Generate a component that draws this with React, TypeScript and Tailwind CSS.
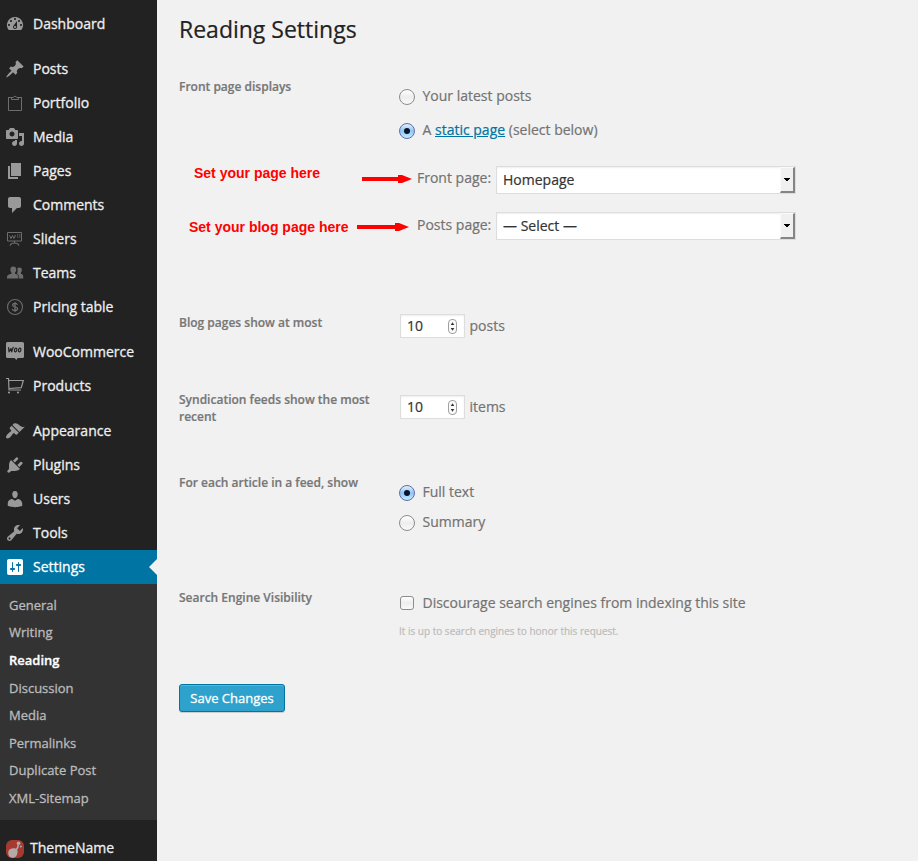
import React from "react";

type IconProps = { name: string };

const paths: Record<string, string> = {
  dashboard:
    "M3.76 16h12.48A7.998 7.998 0 0 0 10 3a7.998 7.998 0 0 0-6.24 13zM10 4c.55 0 1 .45 1 1s-.45 1-1 1-1-.45-1-1 .45-1 1-1zM6 6c.55 0 1 .45 1 1s-.45 1-1 1-1-.45-1-1 .45-1 1-1zm8 0c.55 0 1 .45 1 1s-.45 1-1 1-1-.45-1-1 .45-1 1-1zm-5.37 5.55L12 7v6c0 1.1-.9 2-2 2s-2-.9-2-2c0-.57.24-1.08.63-1.45zM4 10c.55 0 1 .45 1 1s-.45 1-1 1-1-.45-1-1 .45-1 1-1zm12 0c.55 0 1 .45 1 1s-.45 1-1 1-1-.45-1-1 .45-1 1-1zm-5 3c0-.55-.45-1-1-1s-1 .45-1 1 .45 1 1 1 1-.45 1-1z",
  posts:
    "M10.44 3.02l1.82-1.82 6.36 6.35-1.83 1.82c-1.05-.68-2.48-.57-3.41.36l-.75.75c-.92.93-1.04 2.35-.35 3.41l-1.83 1.82-2.41-2.41-2.8 2.79c-.42.42-3.38 2.71-3.8 2.29s1.86-3.39 2.28-3.81l2.79-2.79L4.1 9.36l1.83-1.82c1.05.69 2.48.57 3.4-.36l.75-.75c.93-.92 1.05-2.35.36-3.41z",
  media:
    "M13 11V4c0-.55-.45-1-1-1h-1.67L9 1H5L3.67 3H2c-.55 0-1 .45-1 1v7c0 .55.45 1 1 1h10c.55 0 1-.45 1-1zM7 4.5c1.38 0 2.5 1.12 2.5 2.5S8.38 9.5 7 9.5 4.5 8.38 4.5 7 5.62 4.5 7 4.5zM14 6h5v10.5c0 1.38-1.12 2.5-2.5 2.5S14 17.88 14 16.5s1.12-2.5 2.5-2.5c.17 0 .34.02.5.05V9h-3V6zm-4 8.05V13h2v3.5c0 1.38-1.12 2.5-2.5 2.5S7 17.88 7 16.5 8.12 14 9.5 14c.17 0 .34.02.5.05z",
  pages: "M6 15V2h10v13H6zm-1 1h8v2H3V5h2v11z",
  comments: "M5 2h9c1.1 0 2 .9 2 2v7c0 1.1-.9 2-2 2h-2l-5 5v-5H5c-1.1 0-2-.9-2-2V4c0-1.1.9-2 2-2z",
  appearance:
    "M14.48 11.06L7.41 3.99l1.5-1.5c.5-.56 2.3-.47 3.51.32 1.21.8 1.43 1.28 2.91 2.1 1.18.64 2.45 1.26 4.45.85zm-.71.71L6.7 4.7 4.93 6.47c-.39.39-.39 1.02 0 1.41l1.06 1.06c.39.39.39 1.03 0 1.42-.6.6-1.43 1.11-2.21 1.69-.35.26-.7.53-1.01.84C1.43 14.23.4 16.08 1.4 17.07c.99 1 2.84-.03 4.18-1.36.31-.31.58-.66.85-1.02.57-.78 1.08-1.61 1.69-2.21.39-.39 1.02-.39 1.41 0l1.06 1.06c.39.39 1.02.39 1.41 0z",
  plugins:
    "M13.11 4.36L9.87 7.6 8 5.73l3.24-3.24c.35-.34 1.05-.2 1.56.32.52.51.66 1.21.31 1.55zm-8 1.77l.91-1.12 9.01 9.01-1.19.84c-.71.71-2.63 1.16-3.82 1.16H6.14L4.9 17.26c-.59.59-1.54.59-2.12 0-.59-.58-.59-1.53 0-2.12l1.24-1.24v-3.88c0-1.13.4-3.19 1.09-3.89zm7.26 3.97l3.24-3.24c.34-.35 1.04-.21 1.55.31.52.51.66 1.21.31 1.55l-3.24 3.25z",
  users:
    "M10 9.25c-2.27 0-2.73-3.44-2.73-3.44C7 4.02 7.82 2 9.97 2c2.16 0 2.98 2.02 2.71 3.81 0 0-.41 3.44-2.68 3.44zm0 2.57L12.72 10c2.39 0 4.52 2.33 4.52 4.53v2.49s-3.65 1.13-7.24 1.13c-3.65 0-7.24-1.13-7.24-1.13v-2.49c0-2.25 1.94-4.48 4.47-4.48z",
  tools:
    "M16.68 9.77c-1.34 1.34-3.3 1.67-4.95.99l-5.41 6.52c-.99.99-2.59.99-3.58 0s-.99-2.59 0-3.57l6.52-5.42c-.68-1.65-.35-3.61.99-4.95 1.28-1.28 3.12-1.62 4.72-1.06l-2.89 2.89 2.82 2.82 2.86-2.87c.53 1.58.18 3.39-1.08 4.65zM3.81 16.21c.4.39 1.04.39 1.43 0 .4-.4.4-1.04 0-1.43-.39-.4-1.03-.4-1.43 0-.39.39-.39 1.03 0 1.43z",
  settings:
    "M18 16V4c0-1.1-.9-2-2-2H4c-1.1 0-2 .9-2 2v12c0 1.1.9 2 2 2h12c1.1 0 2-.9 2-2zM8 11h1c.55 0 1 .45 1 1s-.45 1-1 1H8v1.5c0 .28-.22.5-.5.5s-.5-.22-.5-.5V13H6c-.55 0-1-.45-1-1s.45-1 1-1h1V5.5c0-.28.22-.5.5-.5s.5.22.5.5V11zm5-2h-1c-.55 0-1-.45-1-1s.45-1 1-1h1V5.5c0-.28.22-.5.5-.5s.5.22.5.5V7h1c.55 0 1 .45 1 1s-.45 1-1 1h-1v5.5c0 .28-.22.5-.5.5s-.5-.22-.5-.5V9z",
};

function Icon({ name }: IconProps) {
  const dim = "#6d6d6d";
  let body: React.ReactNode = <path fill="currentColor" fillRule="evenodd" d={paths[name]} />;
  if (name === "portfolio") {
    body = (
      <g fill="none" stroke={dim}>
        <path d="M3.500 4.500v13h13v-13" />
        <path d="M3 4.500h3M14 4.500h3M6.500 4v2.500h7V4" />
        <path d="M6 4.500h2.300a1.800 1.800 0 0 1 3.400 0H14" />
      </g>
    );
  } else if (name === "sliders") {
    body = (
      <g fill="none" stroke={dim}>
        <path d="M2.500 3.500h14v8.500h-14z" />
        <path d="M4.500 6.500l1.500 3L7.500 6.500 9 9.500 10.500 6" />
        <path d="M12 6h3.500M12 8h3.500" strokeWidth="1.200" strokeDasharray="1.300 .8" />
        <path d="M9.500 12v2M5 16.500c.8-2 2.500-2.500 4.500-2.500s3.700.5 4.500 2.500" strokeWidth="1.200" />
      </g>
    );
  } else if (name === "teams") {
    body = (
      <g fill={dim}>
        <path d="M8.300 3.500c2 0 2.900 1.200 2.900 3 0 1.500-.5 2.500-1.200 3.100v1.100c2.300.7 3.400 1.300 3.400 3.300v1.500H2V14c0-2 1.700-2.500 4.500-3.300V9.600C5.800 9 5.400 8 5.400 6.500c0-1.800.9-3 2.900-3z" />
        <path d="M14.300 4.500c1.900 0 2.600 1 2.600 2.600 0 1.300-.5 2-1 2.500v1.100c1.800.6 2.300 1.200 2.300 3v1.800h-4c.1-2.600-.6-3.700-2.300-4.400 1-1.400.8-4 .4-5.800.4-.5 1.100-.8 2-.8z" />
      </g>
    );
  } else if (name === "pricing") {
    body = (
      <g fill="none" stroke={dim}>
        <circle cx="10" cy="10" r="7.500" strokeWidth="1.100" />
        <path d="M12.500 7.900C12.100 6.800 11.200 6.400 10 6.400c-1.500 0-2.400.7-2.400 1.700 0 2.600 5 1.100 5 3.700 0 1.100-1 1.800-2.600 1.800-1.400 0-2.400-.6-2.700-1.800M10 4.900v10.200" strokeWidth="1.300" />
      </g>
    );
  } else if (name === "woo") {
    body = (
      <>
        <path fill="currentColor" d="M2.500 0h15A1.500 1.500 0 0 1 19 1.500v13a1.500 1.500 0 0 1-1.500 1.500h-5L11.500 18l-2-2h-7A1.500 1.500 0 0 1 1 14.500v-13A1.500 1.500 0 0 1 2.500 0z" />
        <g fill="none" stroke="#222" strokeWidth="1.200" strokeLinecap="round" strokeLinejoin="round">
          <path d="M3.500 5.500l.6 4.300L5.900 6.500l.8 3.300L8.200 5.300" />
          <ellipse cx="10.700" cy="8" rx="1.200" ry="1.900" transform="rotate(12 10.700 8)" />
          <ellipse cx="14.700" cy="8" rx="1.200" ry="1.900" transform="rotate(12 14.700 8)" />
        </g>
      </>
    );
  } else if (name === "products") {
    body = (
      <g fill="none" stroke="currentColor">
        <path d="M1 2.500h2.500l.5 11.500h12M4 4.500h14.300l-2 7.200L4 12.500" strokeWidth="1.200" />
        <circle cx="4" cy="16.500" r="1.100" fill="currentColor" stroke="none" />
        <circle cx="13" cy="16.500" r="1.100" fill="currentColor" stroke="none" />
      </g>
    );
  }
  return (
    <svg className="ml-[5px] size-5 shrink-0" viewBox="0 0 20 20">
      {body}
    </svg>
  );
}

function MenuRow({ icon, label, active }: { icon: string; label: string; active?: boolean }) {
  return (
    <a
      className={
        active
          ? "relative flex h-[34px] items-center bg-[#0074a2] text-white"
          : "flex h-[34px] items-center text-[#999]"
      }
    >
      <Icon name={icon} />
      <span className={active ? "ml-2 text-white" : "ml-2 text-[#eee]"}>{label}</span>
      {active && (
        <span className="absolute top-[9px] right-0 border-y-8 border-r-8 border-y-transparent border-r-[#f1f1f1]" />
      )}
    </a>
  );
}

function Radio({ checked }: { checked?: boolean }) {
  return (
    <span
      className={
        checked
          ? "mt-0.5 flex size-4 shrink-0 items-center justify-center rounded-full border border-[#5d6ea8] bg-gradient-to-b from-[#e4f0fc] via-[#90c4f4] to-[#c2ecff]"
          : "mt-0.5 flex size-4 shrink-0 items-center justify-center rounded-full border border-[#8c8c8c] bg-gradient-to-b from-white via-[#ededed] to-[#fafafa]"
      }
    >
      {checked && <span className="size-1.5 rounded-full bg-[#08142c]" />}
    </span>
  );
}

function Choice({ checked, children }: { checked?: boolean; children: React.ReactNode }) {
  return (
    <label className="flex h-5 items-center gap-[7.500px]">
      <Radio checked={checked} />
      <span>{children}</span>
    </label>
  );
}

function Select({ value }: { value: string }) {
  return (
    <div className="flex h-7 w-[300px] border border-[#ddd] bg-white pl-1.5 text-[#333] shadow-[inset_0_1px_2px_rgba(0,0,0,0.07)]">
      <span className="flex-1 leading-[26px]">{value}</span>
      <span className="flex w-[15px] items-center justify-center border-t border-r-2 border-b-2 border-l border-t-[#fafafa] border-r-[#858585] border-b-[#858585] border-l-[#fafafa] bg-[#f0f0f0]">
        <svg className="h-1 w-1.5" viewBox="0 0 6 4">
          <path d="M0 0h6v1H5v1H4v1H2V2H1V1H0z" fill="#000" />
        </svg>
      </span>
    </div>
  );
}

function NumberField({ value, unit }: { value: string; unit: string }) {
  return (
    <div className="flex h-6 items-center">
      <div className="ml-px flex h-6 w-[65px] items-center justify-between border border-[#ddd] bg-white pr-[7px] pl-1.5 text-[#333] shadow-[inset_0_1px_2px_rgba(0,0,0,0.07)]">
        <span>{value}</span>
        <svg className="h-[15px] w-[9px]" viewBox="0 0 9 15">
          <rect x=".5" y=".5" width="8" height="14" rx="3.500" fill="#fafafa" stroke="#a0a0a0" />
          <path d="M4.500 3.200L6.300 6H2.700zM4.500 11.800L6.300 9H2.700z" fill="#333" />
        </svg>
      </div>
      <span className="ml-[4.500px]">{unit}</span>
    </div>
  );
}

function Arrow() {
  return (
    <svg className="h-2 w-[50px] shrink-0" viewBox="0 0 50 8">
      <path d="M0 2h36V0h4l10 4-10 4h-4V6H0z" fill="#f00" />
    </svg>
  );
}

function Label({ children }: { children: React.ReactNode }) {
  return <div className="w-[220px] shrink-0 pr-6 text-[12px] leading-[17px] font-semibold text-[#777]">{children}</div>;
}

const groups = [
  [["dashboard", "Dashboard"]],
  [
    ["posts", "Posts"],
    ["portfolio", "Portfolio"],
    ["media", "Media"],
    ["pages", "Pages"],
    ["comments", "Comments"],
    ["sliders", "Sliders"],
    ["teams", "Teams"],
    ["pricing", "Pricing table"],
  ],
  [
    ["woo", "WooCommerce"],
    ["products", "Products"],
  ],
  [
    ["appearance", "Appearance"],
    ["plugins", "Plugins"],
    ["users", "Users"],
    ["tools", "Tools"],
    ["settings", "Settings"],
  ],
];

const submenu = ["General", "Writing", "Reading", "Discussion", "Media", "Permalinks", "Duplicate Post", "XML-Sitemap"];

export default function App() {
  return (
    <div className="flex h-[861px] w-[918px] overflow-hidden bg-[#f1f1f1] font-['Open_Sans',sans-serif] text-[14px] leading-5 text-[#737373] [-webkit-text-stroke:0.2px]">
      <nav className="w-[157px] shrink-0 bg-[#222] pt-[7px] [-webkit-text-stroke:0.3px]">
        <div className="flex flex-col gap-[11px]">
          {groups.map((group, i) => (
            <div key={i}>
              {group.map(([icon, label]) => (
                <MenuRow key={label} icon={icon} label={label} active={icon === "settings"} />
              ))}
            </div>
          ))}
        </div>
        <ul className="h-[236px] bg-[#333] pt-[7.750px] pl-[9px] text-[13px] text-[#bbb]">
          {submenu.map((item) => (
            <li
              key={item}
              className={
                item === "Reading"
                  ? "h-[27.600px] leading-[27.600px] font-semibold text-white"
                  : "h-[27.600px] leading-[27.600px]"
              }
            >
              {item}
            </li>
          ))}
        </ul>
        <a className="mt-[11px] flex h-[34px] items-center pl-1.5 text-[#eee]">
          <svg className="mt-0.5 size-[18px]" viewBox="0 0 18 18">
            <rect width="18" height="18" rx="6" fill="#a53a30" />
            <path d="M10 10c1.800-1.800 2.400-3.500 2.400-6" fill="none" stroke="#b5aaa9" strokeWidth="1.500" />
            <circle cx="12.600" cy="3.200" r="1.800" fill="#b5aaa9" />
            <circle cx="14.800" cy="6.500" r="1" fill="#b5aaa9" />
            <path d="M2.200 13c0-3 2-4.500 4.800-4.700 2 0 4.600.2 4.600 3.200 0 3.500-1.800 6.300-5 6.300-2.600 0-4.400-1.800-4.400-4.800z" fill="#b5aaa9" />
          </svg>
          <span className="ml-1.5">ThemeName</span>
        </a>
      </nav>

      <main className="flex-1 pt-[15px] pl-[22px]">
        <h1 className="h-[63px] text-[23px] leading-[29px] text-[#222]">Reading Settings</h1>
        <section className="flex h-[236px]">
          <Label>Front page displays</Label>
          <div className="pt-2">
            <Choice>Your latest posts</Choice>
            <div className="h-3.5" />
            <Choice checked>
              A <a className="text-[#0074a2] underline">static page</a> (select below)
            </Choice>
            <div className="mt-[26px] -ml-[205px] flex h-7">
              <b className="-mt-px w-[168px] font-['Liberation_Sans',sans-serif] text-[14px] leading-4 text-[#f00] [-webkit-text-stroke:0]">
                Set your page here
              </b>
              <div className="pt-[9px]">
                <Arrow />
              </div>
              <span className="ml-[5px] w-[79px] pt-0.5">Front page:</span>
              <Select value="Homepage" />
            </div>
            <div className="mt-[18px] -ml-[210px] flex h-7">
              <b className="w-[169px] pt-[7px] font-['Liberation_Sans',sans-serif] text-[14px] leading-4 text-[#f00] [-webkit-text-stroke:0]">
                Set your blog page here
              </b>
              <div className="-ml-px pt-[11px]">
                <svg className="h-2 w-[52px]" viewBox="0 0 52 8">
                  <path d="M0 2h38V0h4l10 4-10 4h-4V6H0z" fill="#f00" />
                </svg>
              </div>
              <span className="ml-2 w-[79px] pt-[3px]">Posts page:</span>
              <Select value="— Select —" />
            </div>
          </div>
        </section>
        <section className="flex h-[77px]">
          <Label>Blog pages show at most</Label>
          <NumberField value="10" unit="posts" />
        </section>
        <section className="flex h-[83px]">
          <Label>Syndication feeds show the most recent</Label>
          <div className="pt-1">
            <NumberField value="10" unit="items" />
          </div>
        </section>
        <section className="flex h-[115px]">
          <Label>For each article in a feed, show</Label>
          <div className="flex flex-col gap-2.5 pt-2">
            <Choice checked>Full text</Choice>
            <Choice>Summary</Choice>
          </div>
        </section>
        <section className="flex h-[95px]">
          <Label>Search Engine Visibility</Label>
          <div className="pt-1">
            <label className="flex h-5 items-center">
              <span className="ml-px size-3.5 rounded-[3px] border border-[#8c8c8c] bg-gradient-to-b from-white via-[#ededed] to-[#fafafa]" />
              <span className="ml-[8.500px]">Discourage search engines from indexing this site</span>
            </label>
            <p className="mt-2.5 text-[10px] leading-4 text-[#bbb]">It is up to search engines to honor this request.</p>
          </div>
        </section>
        <button className="h-7 w-[106px] rounded-[3px] border border-[#0074a2] bg-[#2ea2cc] text-[13px] text-white shadow-[inset_0_1px_0_rgba(120,200,230,0.5),0_1px_0_rgba(0,0,0,0.15)] [-webkit-text-stroke:0.3px]">
          Save Changes
        </button>
      </main>
    </div>
  );
}
